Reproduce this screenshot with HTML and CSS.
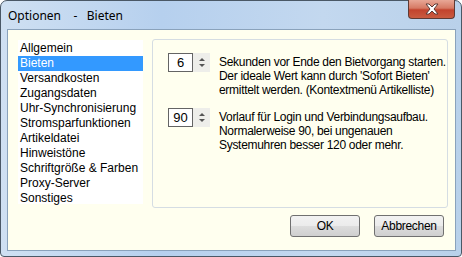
FILE: index.html
```html
<!DOCTYPE html>
<html>
<head>
    <title>Optionen - Bieten</title>
    <meta name="viewport" content="width=device-width, initial-scale=1.0">
    <link rel="stylesheet" href="styles.css">
</head>
<body>
    <div class="window">
      <div class="titlebar">
        <span class="title">Optionen&nbsp;&nbsp;&nbsp;&nbsp;-&nbsp;&nbsp;&nbsp;Bieten</span>
        <div class="close">
          <svg width="16" height="12" viewBox="0 0 16 12">
            <path d="M2 1 L5 1 L8 4 L11 1 L14 1 L10 6 L14 11 L11 11 L8 8 L5 11 L2 11 L6 6 Z" fill="#fff" stroke="#5a3a36" stroke-width="1"/>
          </svg>
        </div>
      </div>
      <div class="client">
        <div class="content">
          <ul class="list">
            <li>Allgemein</li>
            <li class="selected">Bieten</li>
            <li>Versandkosten</li>
            <li>Zugangsdaten</li>
            <li>Uhr-Synchronisierung</li>
            <li>Stromsparfunktionen</li>
            <li>Artikeldatei</li>
            <li>Hinweistöne</li>
            <li>Schriftgröße &amp; Farben</li>
            <li>Proxy-Server</li>
            <li>Sonstiges</li>
          </ul>
          <div class="group">
            <div class="setting">
              <div class="spin">
                <div class="spin-value">6</div>
                <div class="spin-arrows">
                  <span class="up"></span>
                  <span class="down"></span>
                </div>
              </div>
              <p>Sekunden vor Ende den Bietvorgang starten.<br>Der ideale Wert kann durch 'Sofort Bieten'<br>ermittelt werden. (Kontextmenü Artikelliste)</p>
            </div>
            <div class="setting">
              <div class="spin">
                <div class="spin-value">90</div>
                <div class="spin-arrows">
                  <span class="up"></span>
                  <span class="down"></span>
                </div>
              </div>
              <p>Vorlauf für Login und Verbindungsaufbau.<br>Normalerweise 90, bei ungenauen<br>Systemuhren besser 120 oder mehr.</p>
            </div>
          </div>
        </div>
        <div class="buttons">
          <button class="btn">OK</button>
          <button class="btn">Abbrechen</button>
        </div>
      </div>
    </div>
</body>
</html>
```

FILE: styles.css
```css
body {
    margin: 0;
    padding: 0;
    background: #fff;
    font-family: "Liberation Sans", Arial, sans-serif;
    font-size: 12px;
    color: #000;
}
.window {
    width: 462px;
    height: 257px;
    box-sizing: border-box;
    border: 1px solid #4a5866;
    border-radius: 7px 7px 4px 4px;
    background: linear-gradient(to right, #cfe0f2 0%, #b6d0ee 35%, #c3d8ef 70%, #b9d1ea 100%);
    padding: 0 5px 5px 6px;
    display: flex;
    flex-direction: column;
}
.titlebar {
    height: 28px;
    display: flex;
    align-items: flex-start;
    justify-content: space-between;
}
.title {
    font-family: "Noto Sans", "Open Sans", sans-serif;
    font-size: 12px;
    margin-top: 6px;
    margin-left: 1px;
}
.close {
    width: 45px;
    height: 18px;
    margin-right: 1px;
    margin-top: -1px;
    border: 1px solid #5e3a34;
    border-top: none;
    border-radius: 0 0 4px 4px;
    background: linear-gradient(to bottom, #e8a796 0%, #d67a64 45%, #c2432d 55%, #c95b40 100%);
    display: flex;
    align-items: center;
    justify-content: center;
}
.client {
    flex: 1;
    border: 1px solid #8aa2bb;
    background: #ffffef;
    padding: 9px 6px 0 10px;
}
.content {
    display: flex;
    align-items: flex-start;
}
.list {
    list-style: none;
    margin: 1px 0 0 0;
    padding: 1px 0 0 0;
    width: 125px;
    height: 164px;
    box-sizing: border-box;
    background: #fff;
}
.list li {
    height: 15px;
    line-height: 15px;
    padding-left: 2px;
    white-space: nowrap;
}
.list li.selected {
    background: #3399ff;
    color: #fff;
}
.group {
    margin-left: 9px;
    width: 296px;
    height: 169px;
    box-sizing: border-box;
    border: 1px solid #d5dde3;
    border-radius: 3px;
    padding: 13px 0 0 15px;
}
.setting {
    display: flex;
    align-items: flex-start;
    margin-bottom: 11px;
}
.setting p {
    margin: 0 0 0 9px;
    line-height: 14px;
    padding-top: 2px;
    white-space: nowrap;
    letter-spacing: -0.3px;
}
.spin {
    display: flex;
    height: 19px;
}
.spin-value {
    width: 25px;
    height: 19px;
    box-sizing: border-box;
    border: 1px solid #646464;
    background: #fff;
    font-size: 13px;
    line-height: 17px;
    text-align: center;
}
.spin-arrows {
    width: 17px;
    height: 19px;
    background: #eeeeea;
    display: flex;
    flex-direction: column;
    align-items: center;
    justify-content: center;
    gap: 3px;
}
.spin-arrows span {
    width: 0;
    height: 0;
    border-left: 3px solid transparent;
    border-right: 3px solid transparent;
}
.spin-arrows .up {
    border-bottom: 3px solid #555;
}
.spin-arrows .down {
    border-top: 3px solid #555;
}
.buttons {
    display: flex;
    justify-content: flex-end;
    gap: 14px;
    margin-top: 7px;
    padding-right: 5px;
}
.btn {
    width: 70px;
    height: 22px;
    border: 1px solid #707070;
    border-radius: 3px;
    background: linear-gradient(to bottom, #f2f2f2 0%, #ebebeb 50%, #dddddd 51%, #cfcfcf 100%);
    font-family: "Liberation Sans", Arial, sans-serif;
    font-size: 12px;
    letter-spacing: -0.3px;
    color: #000;
    padding: 0;
}
```
